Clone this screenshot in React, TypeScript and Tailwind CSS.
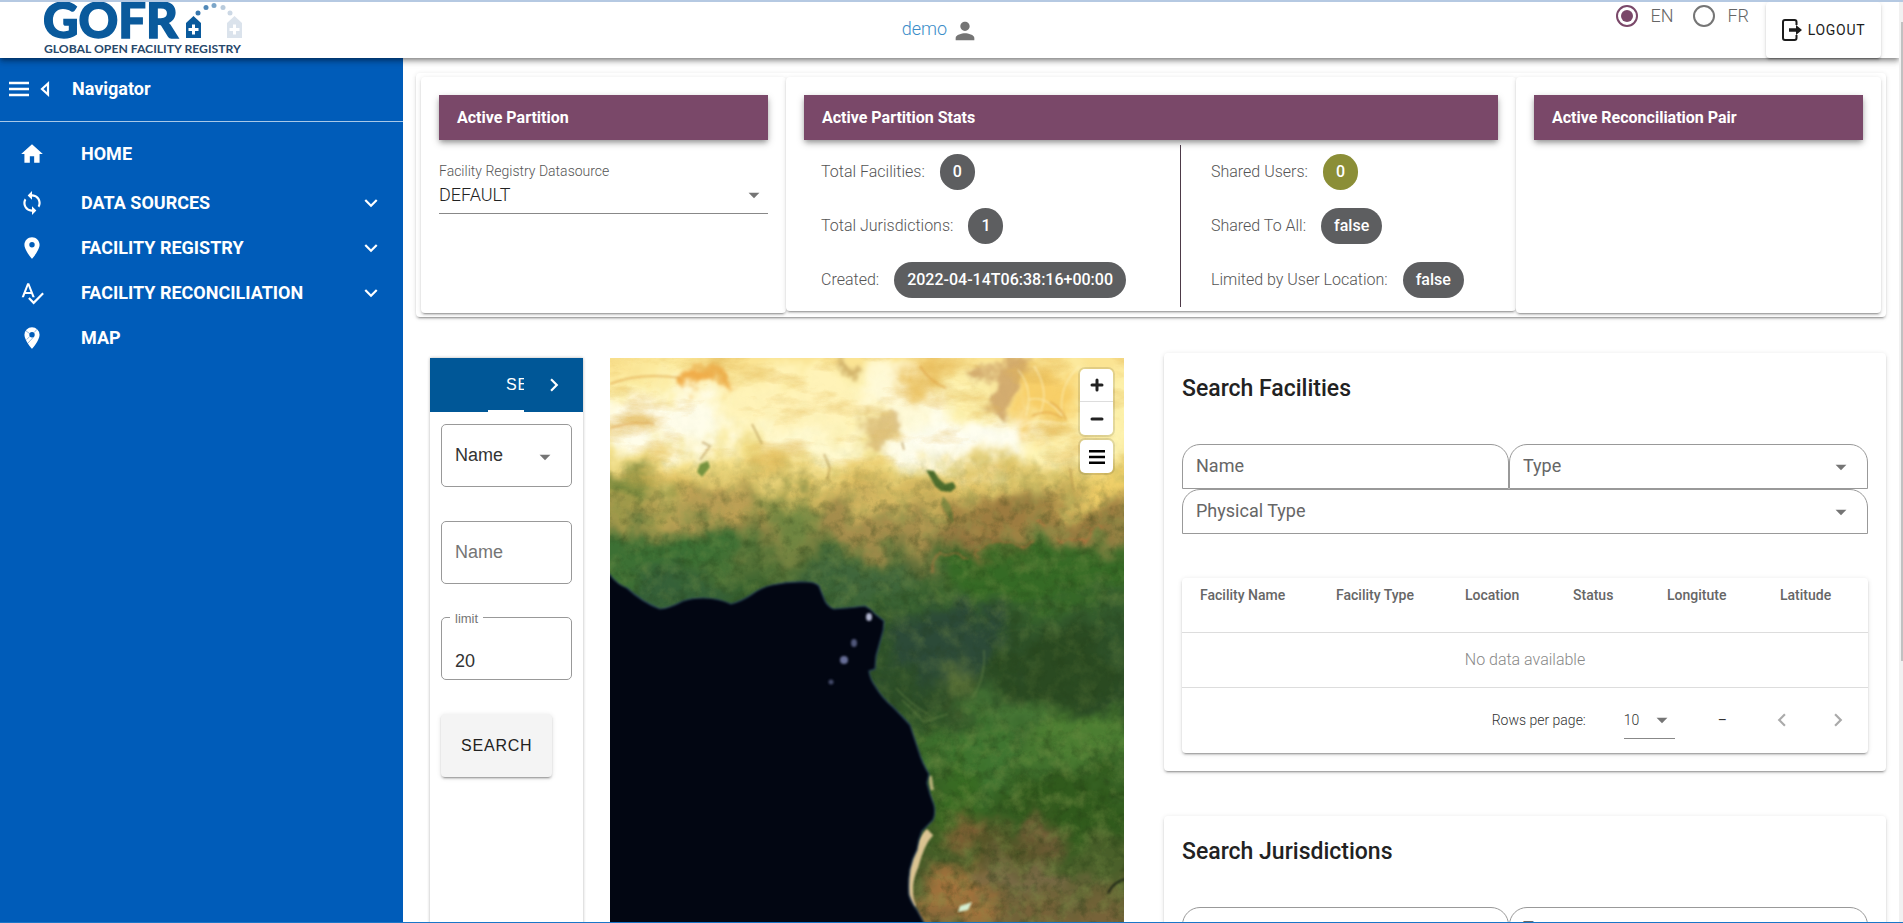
import { useId } from "react";
import type { ReactNode } from "react";
import {
  MdArrowDropDown,
  MdChevronLeft,
  MdChevronRight,
  MdExpandMore,
  MdHome,
  MdPerson,
  MdPlace,
  MdSpellcheck,
  MdSync,
} from "react-icons/md";

const CARD =
  "rounded bg-white shadow-[0_3px_1px_-2px_rgba(0,0,0,0.2),0_2px_2px_0_rgba(0,0,0,0.14),0_1px_5px_0_rgba(0,0,0,0.12)]";

function Logo() {
  return (
    <svg viewBox="0 0 200 54" className="h-[54px] w-[200px]" role="img" aria-label="GOFR Global Open Facility Registry">
      <text x="-1" y="36" fontFamily="Lato, sans-serif" fontWeight="900" fontSize="49" fill="#0a5a9c" stroke="#0a5a9c" strokeWidth="1.500">
        GOFR
      </text>
      <text x="0" y="51" fontFamily="Lato, sans-serif" fontWeight="700" fontSize="12.200" fill="#27486b">
        GLOBAL OPEN FACILITY REGISTRY
      </text>
      <path d="M142 36V21l7.500-7 7.500 7v15z" fill="#0a5a9c" />
      <path d="M148 22.500h3v3.500h3.500v3H151v3.500h-3V29h-3.500v-3h3.500z" fill="#fff" />
      <path d="M183 36V21l7.500-7 7.500 7v15z" fill="#dbe3ec" />
      <path d="M189 22.500h3v3.500h3.500v3H192v3.500h-3V29h-3.500v-3h3.500z" fill="#fff" />
      <circle cx="154" cy="11" r="2.500" fill="#3676ad" />
      <circle cx="162" cy="5.500" r="2.500" fill="#5189b8" />
      <circle cx="170" cy="3.500" r="2.500" fill="#7ba5c8" />
      <circle cx="179" cy="5.500" r="2.500" fill="#b9cbdc" />
      <circle cx="186" cy="11" r="2.500" fill="#ccd8e5" />
    </svg>
  );
}

function LogoutIcon() {
  return (
    <svg viewBox="0 0 20 24" className="h-6 w-5" fill="none" aria-hidden="true">
      <path d="M14.500 7V4Q14.500 2 12.500 2H3Q1 2 1 4v16q0 2 2 2h9.500q2 0 2-2v-3" stroke="#1c1c1c" strokeWidth="2" />
      <path d="M7 10.200h7V7l6 5-6 5v-3.200H7z" fill="#1c1c1c" />
    </svg>
  );
}

function MapPinIcon() {
  return (
    <svg viewBox="0 0 24 24" className="size-[26px]" aria-hidden="true">
      <path
        fill="currentColor"
        fillRule="evenodd"
        d="M12 2a7 7 0 0 0-7 7c0 5.250 7 13 7 13s7-7.750 7-13a7 7 0 0 0-7-7zm0 4.500a2.500 2.500 0 1 1 0 5 2.500 2.500 0 0 1 0-5z"
      />
      <path d="M6.500 5.500l3.500 2.500M14 7l2.500-3M13.500 11l-5.500 6M10 10.500l-3 3" stroke="#005cb9" strokeWidth="0.400" />
    </svg>
  );
}

function Radio({ label, checked }: { label: string; checked?: boolean }) {
  return (
    <label className="flex items-center gap-3 text-lg font-light text-[#666]">
      <input
        type="radio"
        name="locale"
        defaultChecked={checked}
        className="size-[22px] appearance-none rounded-full border-2 border-[#757575] p-[3px] checked:border-[#7a4869] checked:bg-[#7a4869] checked:bg-clip-content"
      />
      {label}
    </label>
  );
}

function Header() {
  return (
    <header className="relative z-10 flex h-14 shrink-0 items-start bg-white pr-[18px] shadow-[0_2px_4px_-1px_rgba(0,0,0,0.3),0_4px_5px_0_rgba(0,0,0,0.2),0_1px_10px_0_rgba(0,0,0,0.15)]">
      <div className="flex-1">
        <div className="ml-11">
          <Logo />
        </div>
      </div>
      <div className="flex h-14 items-center gap-1 pb-[3px]">
        <a href="#account" className="text-lg font-light text-[#3a8cc8]">
          demo
        </a>
        <MdPerson className="mt-1 size-[28px] text-[#757575]" />
      </div>
      <div className="flex flex-1 items-start justify-end">
        <div className="flex gap-5">
          <Radio label="EN" checked />
          <Radio label="FR" />
        </div>
        <button
          type="button"
          className="ml-[17px] flex h-14 w-[115px] items-center justify-center gap-[6px] rounded bg-white text-sm tracking-wider text-[#1c1c1c] shadow-[0_3px_1px_-2px_rgba(0,0,0,0.2),0_2px_2px_0_rgba(0,0,0,0.14),0_1px_5px_0_rgba(0,0,0,0.12)]"
        >
          <LogoutIcon />
          LOGOUT
        </button>
      </div>
    </header>
  );
}

function NavItem({ icon, label, expandable }: { icon: ReactNode; label: string; expandable?: boolean }) {
  return (
    <li>
      <a href={"#" + label.toLowerCase().replace(" ", "-")} className="flex h-[45px] items-center pr-[19px] pl-[19px]">
        <span className="w-[62px]">{icon}</span>
        <span className="flex-1">{label}</span>
        {expandable && <MdExpandMore className="size-[26px] stroke-current" />}
      </a>
    </li>
  );
}

function Sidebar() {
  const icon = "size-[26px]";
  return (
    <nav className="w-[403px] shrink-0 bg-[#005cb9] text-lg font-bold text-white">
      <div className="flex h-16 items-center border-b border-[#a8c8e8] pb-[2px] pl-[9px]">
        <button type="button" aria-label="Collapse menu" className="flex items-center gap-[11px]">
          <svg viewBox="0 0 20 16" className="h-4 w-5" aria-hidden="true">
            <path d="M0 2h20M0 8h20M0 14h20" stroke="currentColor" strokeWidth="2.300" />
          </svg>
          <svg viewBox="0 0 10 16" className="h-4 w-[10px]" aria-hidden="true">
            <path d="M8 2.500L2 8l6 5.500z" fill="none" stroke="currentColor" strokeWidth="2.200" />
          </svg>
        </button>
        <span className="pl-[22px]">Navigator</span>
      </div>
      <ul className="pt-[9px]">
        <li className="mb-1">
          <a href="#home" className="flex h-[45px] items-center pl-[19px]">
            <span className="w-[62px]">
              <MdHome className={icon} />
            </span>
            HOME
          </a>
        </li>
        <NavItem icon={<MdSync className={icon} />} label="DATA SOURCES" expandable />
        <NavItem icon={<MdPlace className={icon} />} label="FACILITY REGISTRY" expandable />
        <NavItem icon={<MdSpellcheck className={icon} />} label="FACILITY RECONCILIATION" expandable />
        <NavItem icon={<MapPinIcon />} label="MAP" />
      </ul>
    </nav>
  );
}

function BarTitle({ children }: { children: ReactNode }) {
  return (
    <h2 className="flex h-[45px] items-center bg-[#7a4869] px-[18px] font-bold text-white shadow-[0_3px_5px_-1px_rgba(0,0,0,0.3),0_3px_8px_0_rgba(0,0,0,0.2)]">
      {children}
    </h2>
  );
}

function Stat({ label, value, olive }: { label: string; value: string; olive?: boolean }) {
  return (
    <div className="flex h-9 items-center gap-[15px]">
      <dt className="font-light text-[#555]">{label}</dt>
      <dd
        className={
          olive
            ? "flex h-9 items-center rounded-full bg-[#8b8e37] px-[13px] font-medium text-white"
            : "flex h-9 items-center rounded-full bg-[#5d5e60] px-[13px] font-medium text-white"
        }
      >
        {value}
      </dd>
    </div>
  );
}

function Summary() {
  return (
    <section className={"grid grid-cols-[365fr_730fr_365fr] items-start px-[5px] pt-1 pb-1 " + CARD}>
      <div className={"h-[236px] px-[18px] pt-[18px] " + CARD}>
        <BarTitle>Active Partition</BarTitle>
        <label htmlFor="datasource" className="mt-[22px] block text-sm leading-[18px] font-light text-[#555]">
          Facility Registry Datasource
        </label>
        <div className="relative">
          <select
            id="datasource"
            className="h-[34px] w-full appearance-none border-b border-[#888] bg-transparent pt-1 pb-2 text-lg leading-5 font-light text-[#222]"
          >
            <option>DEFAULT</option>
          </select>
          <MdArrowDropDown className="pointer-events-none absolute top-[2px] right-[1px] size-[26px] text-[#757575]" />
        </div>
      </div>
      <div className={"h-[234px] px-[18px] pt-[18px] " + CARD}>
        <BarTitle>Active Partition Stats</BarTitle>
        <div className="mt-[5px] flex h-[162px]">
          <dl className="flex w-[377px] flex-col gap-[18px] border-r border-[#4d3a48] pt-[9px] pl-[17px]">
            <Stat label="Total Facilities:" value="0" />
            <Stat label="Total Jurisdictions:" value="1" />
            <Stat label="Created:" value="2022-04-14T06:38:16+00:00" />
          </dl>
          <dl className="flex flex-1 flex-col gap-[18px] pt-[9px] pl-[30px]">
            <Stat label="Shared Users:" value="0" olive />
            <Stat label="Shared To All:" value="false" />
            <Stat label="Limited by User Location:" value="false" />
          </dl>
        </div>
      </div>
      <div className={"h-[236px] px-[18px] pt-[18px] " + CARD}>
        <BarTitle>Active Reconciliation Pair</BarTitle>
      </div>
    </section>
  );
}

function MapSearch() {
  const field = "h-[63px] w-full appearance-none rounded-[5px] border border-[#999] bg-transparent px-[13px] text-lg";
  return (
    <section className="w-[153px] shrink-0 bg-white font-['Liberation_Sans',Arial,sans-serif] shadow-[0_0_3px_rgba(0,0,0,0.3)]">
      <div className="flex h-[54px] bg-[#005797] text-white">
        <div role="tablist" className="ml-[58px] w-9 overflow-hidden">
          <button
            type="button"
            role="tab"
            aria-selected="true"
            className="h-[54px] border-b-2 border-white px-[18px] pt-[2px] text-base tracking-wider"
          >
            SEARCH
          </button>
        </div>
        <button type="button" aria-label="Next tab" className="ml-[17px]">
          <MdChevronRight className="size-[26px] stroke-current" />
        </button>
      </div>
      <form className="px-[11px] pt-3">
        <div className="relative">
          <select aria-label="Search by" className={field + " pb-[2px] text-[#333]"}>
            <option>Name</option>
          </select>
          <MdArrowDropDown className="pointer-events-none absolute top-5 right-[14px] size-[26px] text-[#757575]" />
        </div>
        <input aria-label="Name" placeholder="Name" className={"mt-[34px] placeholder:text-[#757575] " + field} />
        <div className="relative mt-[33px]">
          <input id="limit" defaultValue="20" className={"pt-[26px] text-[#333] " + field} />
          <label htmlFor="limit" className="absolute -top-[7px] left-[9px] bg-white px-[5px] text-[13px] leading-[18px] text-[#757575]">
            limit
          </label>
        </div>
        <button
          type="button"
          className="mt-[34px] h-[63px] rounded bg-[#f4f4f4] px-5 text-base tracking-wider text-[#222] shadow-[0_3px_1px_-2px_rgba(0,0,0,0.2),0_2px_2px_0_rgba(0,0,0,0.14),0_1px_5px_0_rgba(0,0,0,0.12)]"
        >
          SEARCH
        </button>
      </form>
    </section>
  );
}

const OCEAN =
  "M-20 205L0 217Q8 227 17 230Q32 244 50 251Q60 250 73 243Q82 240 93 240Q108 240 121 246Q132 243 141 237Q152 229 162 227Q180 223 197 224Q205 224 209 228Q212 236 215 243Q218 249 224 251Q240 250 255 248Q261 251 265 256L274 263Q274 272 271 280L266 298L265 311L259 313Q260 321 265 328Q272 340 283 349Q292 358 300 367Q304 379 308 391Q312 405 319 416L317 425Q320 437 324 447Q326 455 323 462L312 473Q308 482 307 492Q302 501 300 511Q298 524 299 537Q302 546 307 552L318 572L335 610L345 720H-20Z";

function SatelliteMap() {
  return (
    <svg viewBox="0 0 514 700" preserveAspectRatio="xMidYMin slice" className="size-full" role="img" aria-label="Satellite map">
      <defs>
        <linearGradient id="land" x1="0" y1="0" x2="0" y2="700" gradientUnits="userSpaceOnUse">
          <stop offset="0" stopColor="#fbe493" />
          <stop offset="0.040" stopColor="#fdf0aa" />
          <stop offset="0.105" stopColor="#fef2ad" />
          <stop offset="0.145" stopColor="#f3de86" />
          <stop offset="0.180" stopColor="#e0c86c" />
          <stop offset="0.215" stopColor="#bfa855" />
          <stop offset="0.250" stopColor="#908645" />
          <stop offset="0.290" stopColor="#557237" />
          <stop offset="0.340" stopColor="#38622e" />
          <stop offset="0.400" stopColor="#2f532b" />
          <stop offset="0.500" stopColor="#2c4d27" />
          <stop offset="0.560" stopColor="#3c6a2b" />
          <stop offset="0.650" stopColor="#365f22" />
          <stop offset="0.720" stopColor="#4c5c2a" />
          <stop offset="0.800" stopColor="#776339" />
          <stop offset="1" stopColor="#80653a" />
        </linearGradient>
        <filter id="rough" x="-20%" y="-20%" width="140%" height="140%" colorInterpolationFilters="sRGB">
          <feTurbulence type="fractalNoise" baseFrequency="0.025" numOctaves="6" seed="7" result="n" />
          <feDisplacementMap in="SourceGraphic" in2="n" scale="60" xChannelSelector="R" yChannelSelector="G" />
          <feGaussianBlur stdDeviation="0.800" />
        </filter>
        <filter id="soft" x="-20%" y="-20%" width="140%" height="140%" colorInterpolationFilters="sRGB">
          <feGaussianBlur stdDeviation="9" />
        </filter>
        <filter id="patch" x="-20%" y="-20%" width="140%" height="140%" colorInterpolationFilters="sRGB">
          <feGaussianBlur stdDeviation="3" />
        </filter>
        <filter id="edge" x="-5%" y="-5%" width="110%" height="110%" colorInterpolationFilters="sRGB">
          <feGaussianBlur stdDeviation="0.900" />
        </filter>
        <filter id="grainDark" x="0" y="0" width="100%" height="100%" colorInterpolationFilters="sRGB">
          <feTurbulence type="fractalNoise" baseFrequency="0.090" numOctaves="5" seed="12" />
          <feColorMatrix values="0 0 0 0 0.130  0 0 0 0 0.220  0 0 0 0 0.070  1.800 0 0 0 -0.800" />
        </filter>
        <filter id="grainLight" x="0" y="0" width="100%" height="100%" colorInterpolationFilters="sRGB">
          <feTurbulence type="fractalNoise" baseFrequency="0.060" numOctaves="6" seed="31" />
          <feColorMatrix values="0 0 0 0 0.500  0 0 0 0 0.590  0 0 0 0 0.290  2 0 0 0 -0.900" />
        </filter>
        <filter id="streaks" x="0" y="0" width="100%" height="100%" colorInterpolationFilters="sRGB">
          <feTurbulence type="fractalNoise" baseFrequency="0.014 0.035" numOctaves="6" seed="4" />
          <feColorMatrix values="0 0 0 0 0.890  0 0 0 0 0.720  0 0 0 0 0.340  0 2.600 0 0 -1.300" />
        </filter>
        <linearGradient id="fade" x1="0" y1="0" x2="0" y2="700" gradientUnits="userSpaceOnUse">
          <stop offset="0" stopColor="#fff" stopOpacity="0" />
          <stop offset="0.130" stopColor="#fff" stopOpacity="0.040" />
          <stop offset="0.230" stopColor="#fff" stopOpacity="0.450" />
          <stop offset="0.340" stopColor="#fff" stopOpacity="0.420" />
          <stop offset="0.460" stopColor="#fff" stopOpacity="0.220" />
          <stop offset="0.560" stopColor="#fff" stopOpacity="0.500" />
          <stop offset="1" stopColor="#fff" stopOpacity="0.550" />
        </linearGradient>
        <linearGradient id="desertFade" x1="0" y1="0" x2="0" y2="700" gradientUnits="userSpaceOnUse">
          <stop offset="0" stopColor="#fff" stopOpacity="0.800" />
          <stop offset="0.150" stopColor="#fff" stopOpacity="0.700" />
          <stop offset="0.240" stopColor="#fff" stopOpacity="0" />
        </linearGradient>
        <mask id="fadeMask">
          <rect width="514" height="700" fill="url(#fade)" />
        </mask>
        <mask id="desertMask">
          <rect width="514" height="700" fill="url(#desertFade)" />
        </mask>
      </defs>
      <g filter="url(#rough)">
        <rect x="-60" y="-60" width="634" height="820" fill="url(#land)" />
        <g filter="url(#soft)">
          <ellipse cx="60" cy="62" rx="85" ry="26" fill="#fffdea" />
          <ellipse cx="360" cy="82" rx="80" ry="26" fill="#fffef0" />
          <ellipse cx="180" cy="50" rx="70" ry="36" fill="#fff3b8" />
          <ellipse cx="290" cy="36" rx="40" ry="30" fill="#fffad8" />
          <ellipse cx="200" cy="84" rx="60" ry="12" fill="#fffbd6" />
          <ellipse cx="325" cy="14" rx="28" ry="18" fill="#efc769" />
          <ellipse cx="440" cy="42" rx="34" ry="34" fill="#f8cf68" />
          <ellipse cx="470" cy="92" rx="50" ry="20" fill="#fff6b8" />
          <ellipse cx="500" cy="132" rx="40" ry="18" fill="#efcf68" />
          <ellipse cx="420" cy="128" rx="50" ry="12" fill="#dcc468" />
          <ellipse cx="10" cy="132" rx="46" ry="18" fill="#74873c" />
          <ellipse cx="110" cy="148" rx="60" ry="14" fill="#b89c54" />
          <ellipse cx="40" cy="195" rx="90" ry="26" fill="#3c7034" />
          <ellipse cx="55" cy="238" rx="70" ry="20" fill="#356038" />
          <ellipse cx="180" cy="160" rx="28" ry="28" fill="#6d8440" />
          <ellipse cx="270" cy="172" rx="60" ry="22" fill="#a58d4c" />
          <ellipse cx="280" cy="140" rx="80" ry="14" fill="#d6b962" />
          <ellipse cx="395" cy="154" rx="50" ry="16" fill="#9a783e" />
          <ellipse cx="480" cy="162" rx="44" ry="9" fill="#8e6a38" />
          <ellipse cx="370" cy="182" rx="44" ry="9" fill="#a0713f" />
          <ellipse cx="320" cy="208" rx="34" ry="6" fill="#7d7040" />
          <ellipse cx="440" cy="214" rx="110" ry="28" fill="#356a25" />
          <ellipse cx="240" cy="226" rx="60" ry="20" fill="#3f663c" />
          <ellipse cx="335" cy="285" rx="56" ry="42" fill="#2c4a38" />
          <ellipse cx="450" cy="310" rx="60" ry="40" fill="#2a4a21" />
          <ellipse cx="350" cy="330" rx="14" ry="24" fill="#5f753a" />
          <ellipse cx="400" cy="355" rx="40" ry="14" fill="#487a36" />
          <ellipse cx="370" cy="400" rx="46" ry="30" fill="#3f7530" />
          <ellipse cx="465" cy="380" rx="50" ry="26" fill="#4c7e32" />
          <ellipse cx="460" cy="445" rx="70" ry="28" fill="#305a1c" />
          <ellipse cx="350" cy="435" rx="24" ry="30" fill="#386b22" />
          <ellipse cx="360" cy="470" rx="20" ry="16" fill="#835f35" />
          <ellipse cx="430" cy="475" rx="18" ry="20" fill="#7a5c3a" />
          <ellipse cx="395" cy="500" rx="36" ry="22" fill="#545326" />
          <ellipse cx="345" cy="540" rx="34" ry="34" fill="#a2723c" />
          <ellipse cx="420" cy="525" rx="60" ry="20" fill="#776944" />
          <ellipse cx="495" cy="500" rx="30" ry="20" fill="#4a602a" />
        </g>
        <g filter="url(#patch)">
          <path d="M78 26Q92 6 108 14L128 30Q100 30 78 38z" fill="#f0a640" opacity="0.900" />
          <path d="M364 26q16-12 34-30l24 2q-6 30-16 50l-14 10q-14-8-28-32z" fill="#c99c62" opacity="0.800" />
          <path d="M258 56l18-8 14 8-8 26-16 8-18-6z" fill="#cda661" opacity="0.600" />
          <path d="M220 8h26l8 8h-32z" fill="#b48b46" opacity="0.700" />
        </g>
      </g>
      <rect width="514" height="700" filter="url(#streaks)" mask="url(#desertMask)" />
      <g fill="none" filter="url(#edge)">
        <path d="M408 12q16 18 8 46M424 8q16 24 6 48M452 58q-16-22-34-16M456 66q-36-6-44 2M470 8q-22 18-18 50" stroke="#fff9d0" strokeWidth="1.500" opacity="0.500" />
        <path d="M440 44q12 6 16 18M422 58q16-8 30 2M0 26q30-12 70-6M0 70q26-8 44-4M310 8q10 16 26 22" stroke="#dc9a3c" strokeWidth="2" opacity="0.500" />
        <path d="M142 66l10 20M214 96l6 14-3 12M92 84l8 4-10 14M460 110l3 22M292 84l2 8" stroke="#a98542" strokeWidth="2" opacity="0.500" />
      </g>
      <path d="M316 112l8 1 5 8 6 5 8-2 3 5-5 5-10-1-6-5-5-9z" fill="#4d6d2c" filter="url(#edge)" />
      <path d="M333 138q12 12 10 28-6-8-12-20z" fill="#6f843c" opacity="0.700" filter="url(#edge)" />
      <path d="M90 106l8-3 2 6-8 10-5-5z" fill="#77933f" filter="url(#edge)" />
      <g stroke="#c8703f" strokeWidth="4" opacity="0.450" filter="url(#rough)" fill="none">
        <path d="M440 170l50 4M360 190l60-6M310 212l50-8" />
      </g>
      <g mask="url(#fadeMask)">
        <rect width="514" height="700" filter="url(#grainDark)" />
        <rect width="514" height="700" filter="url(#grainLight)" />
      </g>
      <g fill="none" filter="url(#edge)">
        <path d="M286 330q14 16 32 26M292 342l22 22 24-8M362 340q14-20 12-48" stroke="#71914c" strokeWidth="1.500" opacity="0.450" />
        <path d="M374 284q30-20 60-8 20 16 40 22" stroke="#71914c" strokeWidth="1" opacity="0.250" />
        <path d="M302 550Q294 530 304 508Q310 484 320 474" stroke="#f6d6a4" strokeWidth="9" opacity="0.850" />
        <path d="M320 418l2 14" stroke="#e6cf9a" strokeWidth="4" opacity="0.700" />
        <path d="M498 535q6-12 18-14" stroke="#1c2416" strokeWidth="2" />
      </g>
      <path d="M350 548l12-4-4 8-10 2z" fill="#d4efd2" filter="url(#edge)" />
      <path d={OCEAN} fill="#020612" stroke="#2a4560" strokeWidth="1.200" filter="url(#edge)" />
      <g fill="#727aa6" filter="url(#edge)">
        <ellipse cx="259" cy="259" rx="3" ry="4" fill="#b0b4ce" />
        <ellipse cx="244" cy="285" rx="3" ry="4" opacity="0.700" />
        <ellipse cx="234" cy="302" rx="4" ry="4" opacity="0.900" />
        <circle cx="221" cy="324" r="2.500" opacity="0.600" />
      </g>
    </svg>
  );
}

function MapPanel() {
  const button = "flex w-[33px] items-center justify-center bg-white";
  return (
    <section className="relative min-w-0 flex-1 overflow-hidden bg-[#020712]">
      <SatelliteMap />
      <div className="absolute top-[11px] right-[11px] flex flex-col gap-[5px]">
        <div className="divide-y divide-[#ddd] overflow-hidden rounded-[5px] shadow-[0_0_0_2px_rgba(0,0,0,0.1)]">
          <button type="button" aria-label="Zoom in" className={"h-[33px] " + button}>
            <svg viewBox="0 0 14 14" className="size-[14px]" stroke="#222" strokeWidth="3" strokeLinecap="round" aria-hidden="true">
              <path d="M2 7h10M7 2v10" />
            </svg>
          </button>
          <button type="button" aria-label="Zoom out" className={"h-[33px] " + button}>
            <svg viewBox="0 0 14 14" className="size-[14px]" stroke="#222" strokeWidth="3" strokeLinecap="round" aria-hidden="true">
              <path d="M2 7h10" />
            </svg>
          </button>
        </div>
        <button type="button" aria-label="Layers" className={"h-[33px] rounded-[5px] shadow-[0_0_0_2px_rgba(0,0,0,0.1)] " + button}>
          <svg viewBox="0 0 16 14" className="h-[14px] w-4" fill="#000" aria-hidden="true">
            <path d="M0 0h16v2.600H0zM0 5.700h16v2.600H0zM0 11.400h16V14H0z" />
          </svg>
        </button>
      </div>
    </section>
  );
}

function ShapedSelect({ label }: { label: string }) {
  return (
    <div className="relative">
      <select
        aria-label={label}
        className="h-[45px] w-full appearance-none rounded-t-[18px] border border-[#999] bg-transparent px-[13px] pb-[2px] text-lg text-[#666]"
      >
        <option>{label}</option>
      </select>
      <MdArrowDropDown className="pointer-events-none absolute top-[10px] right-[14px] size-[26px] text-[#757575]" />
    </div>
  );
}

function SearchCard({ title, columns }: { title: string; columns: string[] }) {
  const id = useId();
  return (
    <section className={"px-[18px] pt-[18px] pb-[18px] " + CARD}>
      <h2 className="mb-[37px] text-[23px] leading-9 font-medium text-[#222]">{title}</h2>
      <div className="grid grid-cols-[327fr_359fr]">
        <input
          aria-label="Name"
          placeholder="Name"
          className="h-[45px] w-full min-w-0 rounded-t-[18px] border border-[#999] px-[13px] pb-[2px] text-lg placeholder:text-[#666]"
        />
        <ShapedSelect label="Type" />
        <div className="col-span-2">
          <ShapedSelect label="Physical Type" />
        </div>
      </div>
      <div className={"mt-11 " + CARD}>
        <table className="w-full table-fixed text-left">
          <colgroup>
            <col className="w-[136px]" />
            <col className="w-[129px]" />
            <col className="w-[108px]" />
            <col className="w-[94px]" />
            <col className="w-[113px]" />
            <col />
          </colgroup>
          <thead>
            <tr className="h-[54px] border-b border-[#ddd] align-top text-sm leading-[18px] text-[#666]">
              {columns.map((column) => (
                <th key={column} scope="col" className="pt-2 pl-[18px] font-medium whitespace-nowrap">
                  {column}
                </th>
              ))}
            </tr>
          </thead>
          <tbody>
            <tr className="h-[55px] border-b border-[#ddd]">
              <td colSpan={6} className="text-center font-light text-[#888]">
                No data available
              </td>
            </tr>
          </tbody>
        </table>
        <div className="flex h-[65px] items-center justify-end pr-[17px] text-sm text-[#333]">
          <label htmlFor={id} className="font-light">
            Rows per page:
          </label>
          <div className="relative ml-[38px] pt-1">
            <select id={id} className="h-[34px] w-[51px] appearance-none border-b border-[#888] bg-transparent pb-1 text-sm font-light">
              <option>10</option>
            </select>
            <MdArrowDropDown className="pointer-events-none absolute top-[6px] right-0 size-[26px] text-[#757575]" />
          </div>
          <span className="ml-[43px]">–</span>
          <button type="button" aria-label="Previous page" className="ml-[42px] text-[#aaa]">
            <MdChevronLeft className="size-[26px]" />
          </button>
          <button type="button" aria-label="Next page" className="ml-[30px] text-[#aaa]">
            <MdChevronRight className="size-[26px]" />
          </button>
        </div>
      </div>
    </section>
  );
}

const FACILITY_COLUMNS = ["Facility Name", "Facility Type", "Location", "Status", "Longitute", "Latitude"];
const JURISDICTION_COLUMNS = ["Name", "Type", "Location", "Status", "Longitute", "Latitude"];

export default function App() {
  return (
    <div className="flex h-screen overflow-hidden border-t-2 border-b border-t-[#b5c9e2] border-b-[#1976c8] bg-white font-[Roboto,sans-serif] text-base text-[#222]">
      <div className="flex min-w-0 flex-1 flex-col overflow-hidden">
        <Header />
        <div className="flex min-h-0 flex-1">
          <Sidebar />
          <main className="min-w-0 flex-1 overflow-hidden pt-[15px] pr-[13px] pl-[13px]">
            <Summary />
            <div className="flex items-start pt-9">
              <div className="flex h-[700px] min-w-0 flex-1 gap-[27px] pt-[5px] pr-10 pl-[14px]">
                <MapSearch />
                <MapPanel />
              </div>
              <div className="flex w-[722px] shrink-0 flex-col gap-[45px]">
                <SearchCard title="Search Facilities" columns={FACILITY_COLUMNS} />
                <SearchCard title="Search Jurisdictions" columns={JURISDICTION_COLUMNS} />
              </div>
            </div>
          </main>
        </div>
      </div>
      <div className="w-1 shrink-0 bg-[#f1f1f1] pt-5 pl-[2px]">
        <div className="h-[71%] bg-[#c1c1c1]" />
      </div>
    </div>
  );
}
